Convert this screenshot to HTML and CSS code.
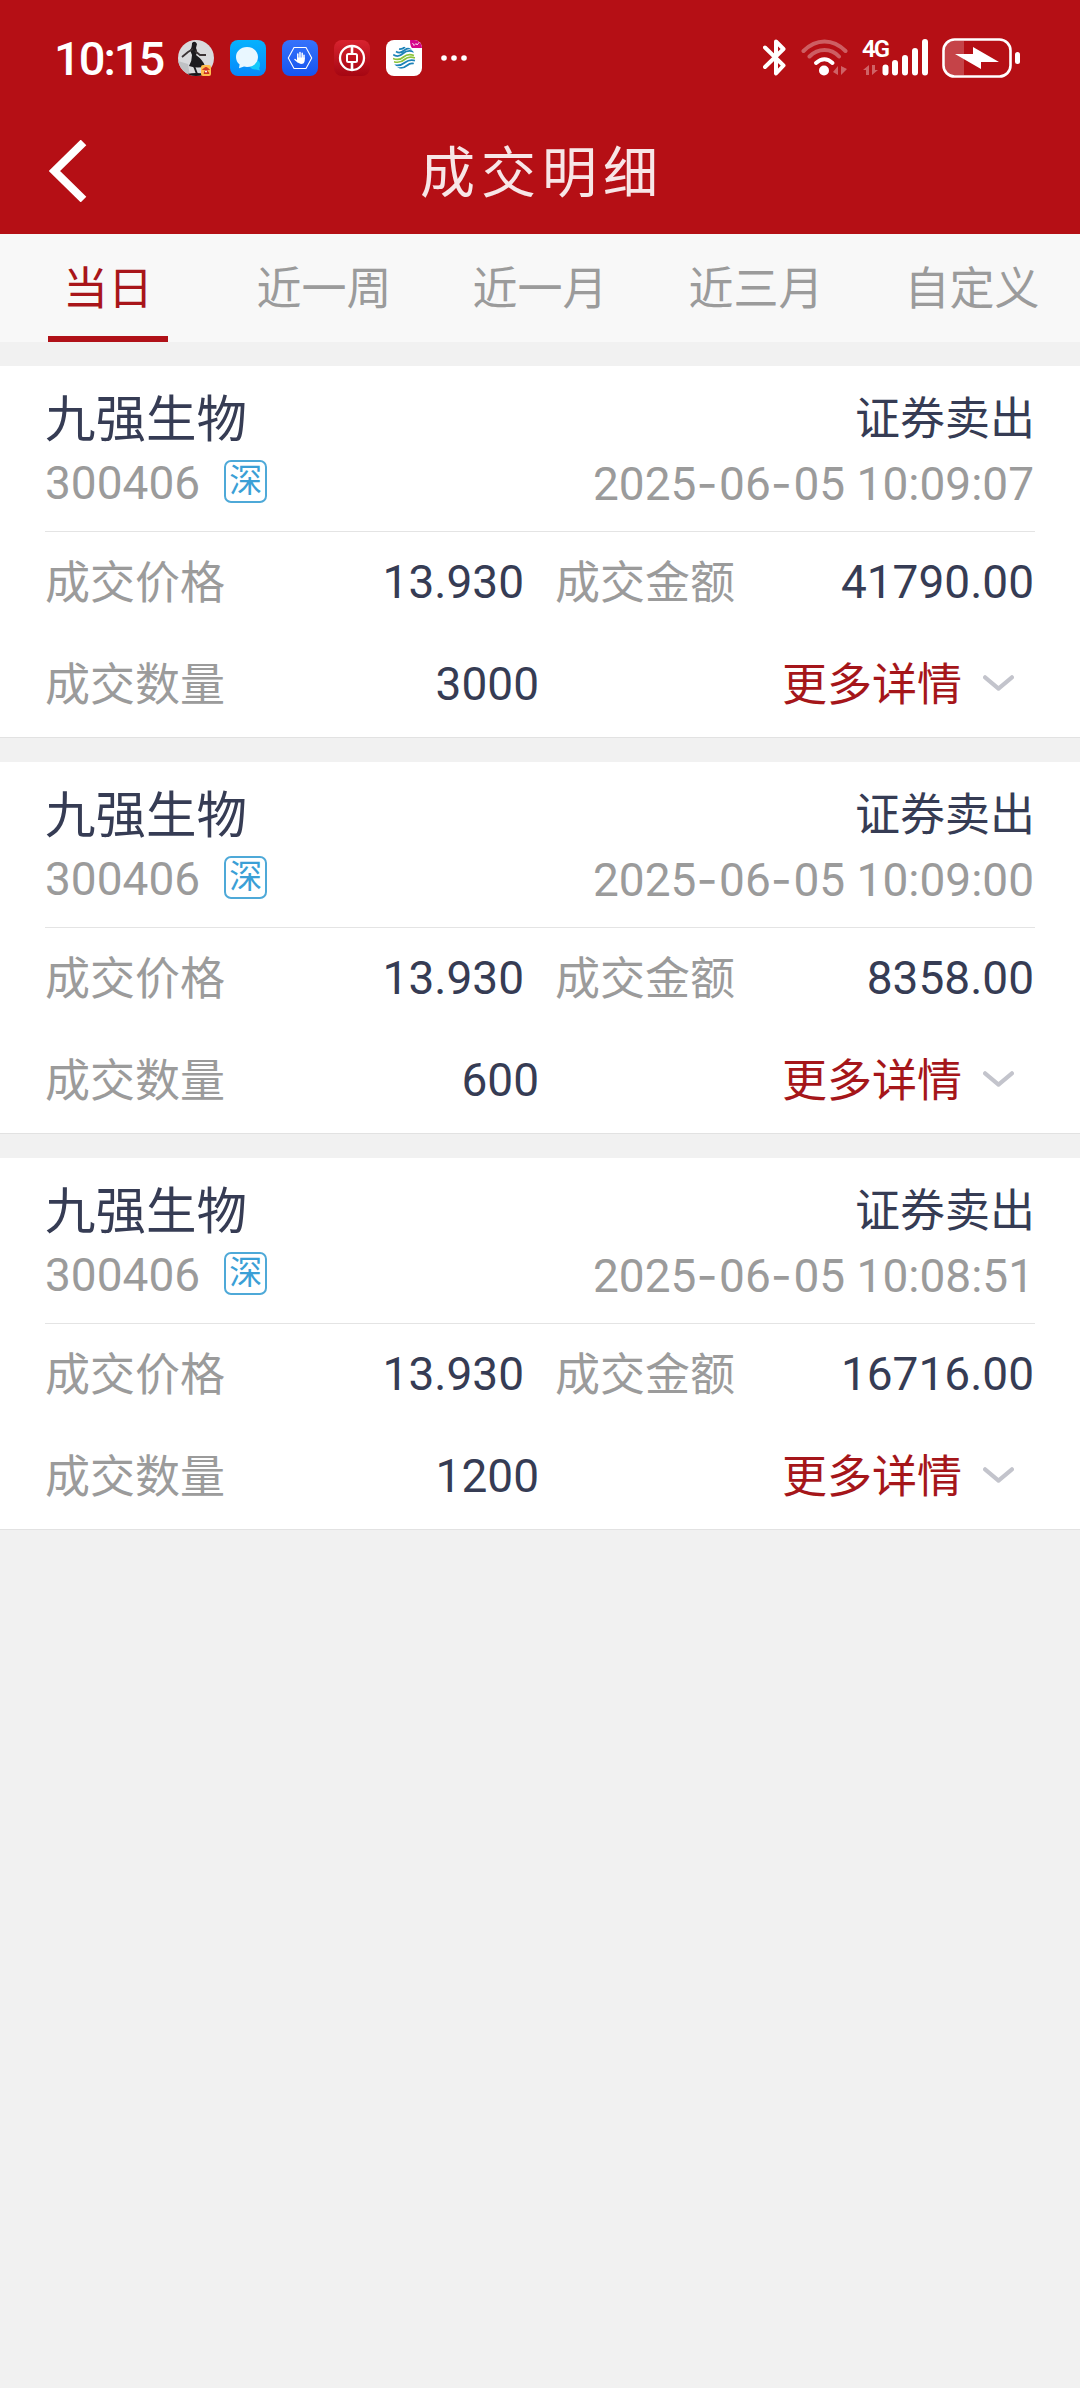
FILE: index.html
```html
<!DOCTYPE html>
<html lang="zh-CN">
<head>
    <meta charset="UTF-8">
    <meta name="viewport" content="width=device-width, initial-scale=1.0">
    <title>成交明细</title>
    <link rel="stylesheet" href="styles.css">
</head>
<body>
    <svg width="0" height="0" class="defs">
        <symbol id="chevron" viewBox="0 0 30 16">
            <path d="M2 2L15 13L28 2" fill="none" stroke="#c3c4cc" stroke-width="4" stroke-linecap="round" stroke-linejoin="round"/>
        </symbol>
        <linearGradient id="chatBg" x1="0" y1="0" x2="0" y2="1"><stop offset="0" stop-color="#06b2fd"/><stop offset="1" stop-color="#0788fb"/></linearGradient>
        <linearGradient id="handBg" x1="0" y1="0" x2="0" y2="1"><stop offset="0" stop-color="#3673fb"/><stop offset="1" stop-color="#1554ef"/></linearGradient>
        <linearGradient id="bankBg" x1="0" y1="0" x2="0" y2="1"><stop offset="0" stop-color="#d8232f"/><stop offset="1" stop-color="#a50612"/></linearGradient>
        <clipPath id="round"><circle cx="18" cy="18" r="18"/></clipPath>
        <clipPath id="tile"><rect width="36" height="36" rx="8"/></clipPath>
        <clipPath id="globe"><circle cx="18" cy="18" r="11.3"/></clipPath>
    </svg>

    <header>
        <div class="status-bar">
            <div class="status-left">
                <span class="time">10:15</span>
                <svg class="app" viewBox="0 0 36 36">
                    <g clip-path="url(#round)">
                        <rect width="36" height="36" fill="#d9dadd"/>
                        <path d="M0 21L10 24L12 36H0Z" fill="#bfc1c4"/>
                        <path d="M9 34Q18 32 28 34L25 36H11Z" fill="#17171b"/>
                        <path d="M14 3Q17 0 19 4L18 8Q20 12 18 15Q25 20 27 26Q21 29 11 26Q14 21 14 15L12 10Q14 8 14 3Z" fill="#1c1b1f"/>
                        <path d="M15 9L10 12L4 17M17 11L22 15L28 15" fill="none" stroke="#3b3335" stroke-width="1.8"/>
                        <path d="M16 26L19 34" stroke="#1c1b1f" stroke-width="2"/>
                    </g>
                    <rect x="23" y="25" width="10" height="11" rx="2" fill="#ffbe4f"/>
                    <path d="M24.5 30Q28 25 31.5 30M26 33.500L28 29L31 33.500Z" fill="#d33825" stroke="#c93423"/>
                    <circle cx="28" cy="31.500" r="1" fill="#fff"/>
                </svg>
                <svg class="app" viewBox="0 0 36 36">
                    <rect width="36" height="36" rx="8" fill="url(#chatBg)"/>
                    <path d="M26 20Q30.500 21 30 25Q30 27 29 28L30 30.500L26 29.500Q22 30 20 27Z" fill="#14c9fb"/>
                    <path d="M17 7C23.500 7 28 11.500 28 17S23.500 27 17 27Q15.500 27 14 26.600L9 28.300L9.600 24.500Q6 21.500 6 17C6 11.500 10.500 7 17 7Z" fill="#e9f7ff"/>
                </svg>
                <svg class="app" viewBox="0 0 36 36">
                    <rect width="36" height="36" rx="8" fill="url(#handBg)"/>
                    <path d="M12 7.500H24L29.700 18L24 28.500H12L6.300 18Z" fill="none" stroke="#fff" stroke-width="1.100"/>
                    <path d="M15.800 19V14M18 18V12.500M20.200 18V13.200M22 19V15.200M13 19.500L16 22" stroke="#fff" stroke-width="1.500" stroke-linecap="round"/>
                    <path d="M15 17.500H22.700V20.500Q22.500 24 19 24Q16.500 24 15 21Z" fill="#fff"/>
                </svg>
                <svg class="app" viewBox="0 0 36 36">
                    <rect width="36" height="36" rx="8" fill="url(#bankBg)"/>
                    <circle cx="18" cy="18" r="12" fill="none" stroke="#fff" stroke-width="2.300"/>
                    <rect x="13" y="14" width="10" height="8" rx="1.500" fill="none" stroke="#fff" stroke-width="2"/>
                    <path d="M18 6V14M18 22V30" stroke="#fff" stroke-width="2.600"/>
                </svg>
                <svg class="app" viewBox="0 0 36 36">
                    <g clip-path="url(#tile)">
                        <rect width="36" height="36" fill="#fff"/>
                        <path d="M24 0H36V8H26Q24 6 24 0Z" fill="#d5068b"/>
                        <path d="M26.500 3L28 5.500L30 3.500L31 5L33.500 2" fill="none" stroke="#fff" stroke-width=".8"/>
                    </g>
                    <g clip-path="url(#globe)" fill="none" stroke-width="1.700">
                        <path d="M10 11.500Q14 14 18 10.500T26 9M7 14.500Q12 18 17 13.500T28 12M8 25Q14 26.500 19 22.500T30 21M11 28Q17 29 21 25.500T29 24M13 9Q16 9.500 19 7" stroke="#1d82b8"/>
                        <path d="M7 18.500Q13 21 17.500 17T28 15.500M8 21.700Q14 23.500 18.500 19.500T29 18" stroke="#8cc33c"/>
                    </g>
                </svg>
                <svg class="dots" viewBox="0 0 26 6"><g fill="#fff"><circle cx="3" cy="3" r="2.800"/><circle cx="13" cy="3" r="2.800"/><circle cx="23" cy="3" r="2.800"/></g></svg>
            </div>
            <div class="status-right">
                <svg width="23" height="37" viewBox="0 0 23 37">
                    <path d="M2 8.500L20.500 26.500L13 34.500V2.500L20.500 10L2 28" fill="none" stroke="#fff" stroke-width="4" stroke-linejoin="round" stroke-linecap="round"/>
                </svg>
                <svg class="wifi" width="47" height="37" viewBox="0 0 47 37">
                    <g fill="none" stroke-width="4" stroke-linecap="round">
                        <path d="M2.500 12Q12 2.500 23.500 2.500T44.500 12M8.500 17.500Q15 11 23.500 11T38 17.500" stroke="#fff" stroke-opacity=".33"/>
                        <path d="M15 24Q23.500 16.500 31.500 24" stroke="#fff"/>
                    </g>
                    <circle cx="23" cy="31.500" r="5" fill="#fff"/>
                    <path d="M32 33L37 27V36M46 30L40 36V27" fill="#fff" fill-opacity=".35"/>
                </svg>
                <div class="signal">
                    <span class="net">4G</span>
                    <svg width="67" height="37" viewBox="0 0 67 37">
                        <path d="M1 31L7 26V36H4V31M16 31L10 36V26H13V31" fill="#fff" fill-opacity=".35"/>
                        <path d="M23.500 28.500V33.500M33 24V33.500M43 19V33.500M53 12V33.500M63 3V33.500" stroke="#fff" stroke-width="6" stroke-linecap="round"/>
                    </svg>
                </div>
                <svg class="battery" width="78" height="40" viewBox="0 0 78 40">
                    <path d="M12 3H22V37H12Q3 37 3 28V12Q3 3 12 3Z" fill="#fff" fill-opacity=".22"/>
                    <rect x="1.500" y="1.500" width="67" height="37" rx="11" fill="none" stroke="#fff" stroke-width="2.600"/>
                    <rect x="73" y="14" width="5" height="12" rx="2.500" fill="#fff"/>
                    <path d="M13 16H31V9L57 24H39V31Z" fill="#fff"/>
                </svg>
            </div>
        </div>
        <div class="nav">
            <svg class="back" viewBox="0 0 38 62"><path d="M34.500 2.500L5.500 31L34.500 59.500" fill="none" stroke="#fff" stroke-width="8"/></svg>
            <h1>成交明细</h1>
        </div>
    </header>

    <nav class="tabs">
        <a class="tab active">当日</a>
        <a class="tab">近一周</a>
        <a class="tab">近一月</a>
        <a class="tab">近三月</a>
        <a class="tab">自定义</a>
    </nav>

    <main>
        <section class="card">
            <div class="card-head">
                <div class="line title-line"><span class="name">九强生物</span><span>证券卖出</span></div>
                <div class="line code-line"><span class="code">300406</span><span class="market">深</span><span class="date">2025<i>-</i>06<i>-</i>05 10:09:07</span></div>
            </div>
            <div class="row">
                <div class="cell"><span class="label">成交价格</span><span class="value">13.930</span></div>
                <div class="cell"><span class="label">成交金额</span><span class="value">41790.00</span></div>
            </div>
            <div class="row row-more">
                <div class="cell"><span class="label">成交数量</span><span class="value">3000</span></div>
                <a class="more">更多详情<svg><use href="#chevron"/></svg></a>
            </div>
        </section>

        <section class="card">
            <div class="card-head">
                <div class="line title-line"><span class="name">九强生物</span><span>证券卖出</span></div>
                <div class="line code-line"><span class="code">300406</span><span class="market">深</span><span class="date">2025<i>-</i>06<i>-</i>05 10:09:00</span></div>
            </div>
            <div class="row">
                <div class="cell"><span class="label">成交价格</span><span class="value">13.930</span></div>
                <div class="cell"><span class="label">成交金额</span><span class="value">8358.00</span></div>
            </div>
            <div class="row row-more">
                <div class="cell"><span class="label">成交数量</span><span class="value">600</span></div>
                <a class="more">更多详情<svg><use href="#chevron"/></svg></a>
            </div>
        </section>

        <section class="card">
            <div class="card-head">
                <div class="line title-line"><span class="name">九强生物</span><span>证券卖出</span></div>
                <div class="line code-line"><span class="code">300406</span><span class="market">深</span><span class="date">2025<i>-</i>06<i>-</i>05 10:08:51</span></div>
            </div>
            <div class="row">
                <div class="cell"><span class="label">成交价格</span><span class="value">13.930</span></div>
                <div class="cell"><span class="label">成交金额</span><span class="value">16716.00</span></div>
            </div>
            <div class="row row-more">
                <div class="cell"><span class="label">成交数量</span><span class="value">1200</span></div>
                <a class="more">更多详情<svg><use href="#chevron"/></svg></a>
            </div>
        </section>
    </main>
</body>
</html>
```

FILE: styles.css
```css
* {
    box-sizing: border-box;
}
body {
    margin: 0;
    min-height: 100vh;
    background-color: #f1f1f1;
    font-family: Roboto, "Noto Sans CJK SC", sans-serif;
    font-size: 45px;
    color: #363c54;
}
svg {
    display: block;
    flex: none;
}
.defs {
    position: absolute;
}
header {
    height: 234px;
    background-color: #b50f15;
    color: #fff;
}
.status-bar {
    display: flex;
    justify-content: space-between;
    height: 108px;
    padding: 37px 60px 0 54px;
}
.status-left, .status-right {
    display: flex;
    align-items: center;
    height: 41px;
}
.time {
    width: 124px;
    font-size: 47px;
    font-weight: 500;
    letter-spacing: -2px;
    line-height: 41px;
    padding-top: 2px;
    white-space: nowrap;
}
.app {
    width: 36px;
    height: 36px;
    margin-right: 16px;
}
.dots {
    width: 26px;
    height: 6px;
    margin-left: 3px;
}
.wifi {
    margin-left: 15px;
}
.signal {
    position: relative;
    margin-left: 14px;
}
.net {
    position: absolute;
    left: 0;
    top: 0;
    font-size: 24px;
    font-weight: 600;
    line-height: 20px;
    letter-spacing: -2px;
}
.battery {
    margin-left: 13px;
}
.nav {
    display: grid;
    grid-template-columns: 86px 1fr 86px;
    align-items: center;
    height: 126px;
}
.back {
    width: 38px;
    height: 62px;
    margin-left: 49px;
}
h1 {
    margin: 0;
    padding: 5px 0 0 4px;
    font-size: 55px;
    font-weight: 400;
    letter-spacing: 6px;
    line-height: 121px;
    text-align: center;
    color: #f7e6e7;
}
.tabs {
    display: grid;
    grid-template-columns: repeat(5, 1fr);
    justify-items: center;
    height: 108px;
    background-color: #f8f8f8;
}
.tab {
    line-height: 112px;
    height: 108px;
    color: #9b9b9b;
}
.tab.active {
    width: 120px;
    text-align: center;
    color: #a8151a;
    border-bottom: 6px solid #b01118;
}
main {
    display: flex;
    flex-direction: column;
    gap: 24px;
    padding-top: 24px;
}
.card {
    height: 372px;
    padding: 0 45px;
    background-color: #fff;
    border-bottom: 1px solid #e2e2e2;
}
.card-head {
    height: 166px;
    padding-top: 15px;
    border-bottom: 1px solid #e4e4e4;
}
.line {
    display: flex;
    align-items: center;
}
.title-line {
    justify-content: space-between;
    height: 68px;
}
.name {
    font-size: 50.5px;
}
.code-line {
    height: 68px;
    color: #9b9b9b;
}
.code, .date, .value {
    font-size: 46px;
}
.market {
    width: 43px;
    height: 43px;
    margin: 0 0 3px 24px;
    border: 2px solid #4ea9d8;
    border-radius: 7px;
    font-size: 33px;
    line-height: 37px;
    text-align: center;
    color: #3b9fd6;
}
.date {
    margin-left: auto;
    margin-right: 1px;
}
.date i {
    font-family: Inter, sans-serif;
    font-style: normal;
    letter-spacing: 1.5px;
}
.row {
    display: grid;
    grid-template-columns: 1fr 1fr;
    gap: 30px;
    height: 102px;
}
.row-more {
    grid-template-columns: 495px 1fr;
    gap: 0;
}
.cell {
    display: flex;
    align-items: center;
    justify-content: space-between;
}
.label {
    padding-bottom: 8px;
    color: #9b9b9b;
}
.value {
    padding-bottom: 2px;
    margin-right: 1px;
}
.more {
    display: flex;
    align-items: center;
    justify-content: flex-end;
    padding: 0 21px 8px 0;
    color: #a5161a;
}
.more svg {
    width: 31px;
    height: 17px;
    margin: 4px 0 0 21px;
}
```
